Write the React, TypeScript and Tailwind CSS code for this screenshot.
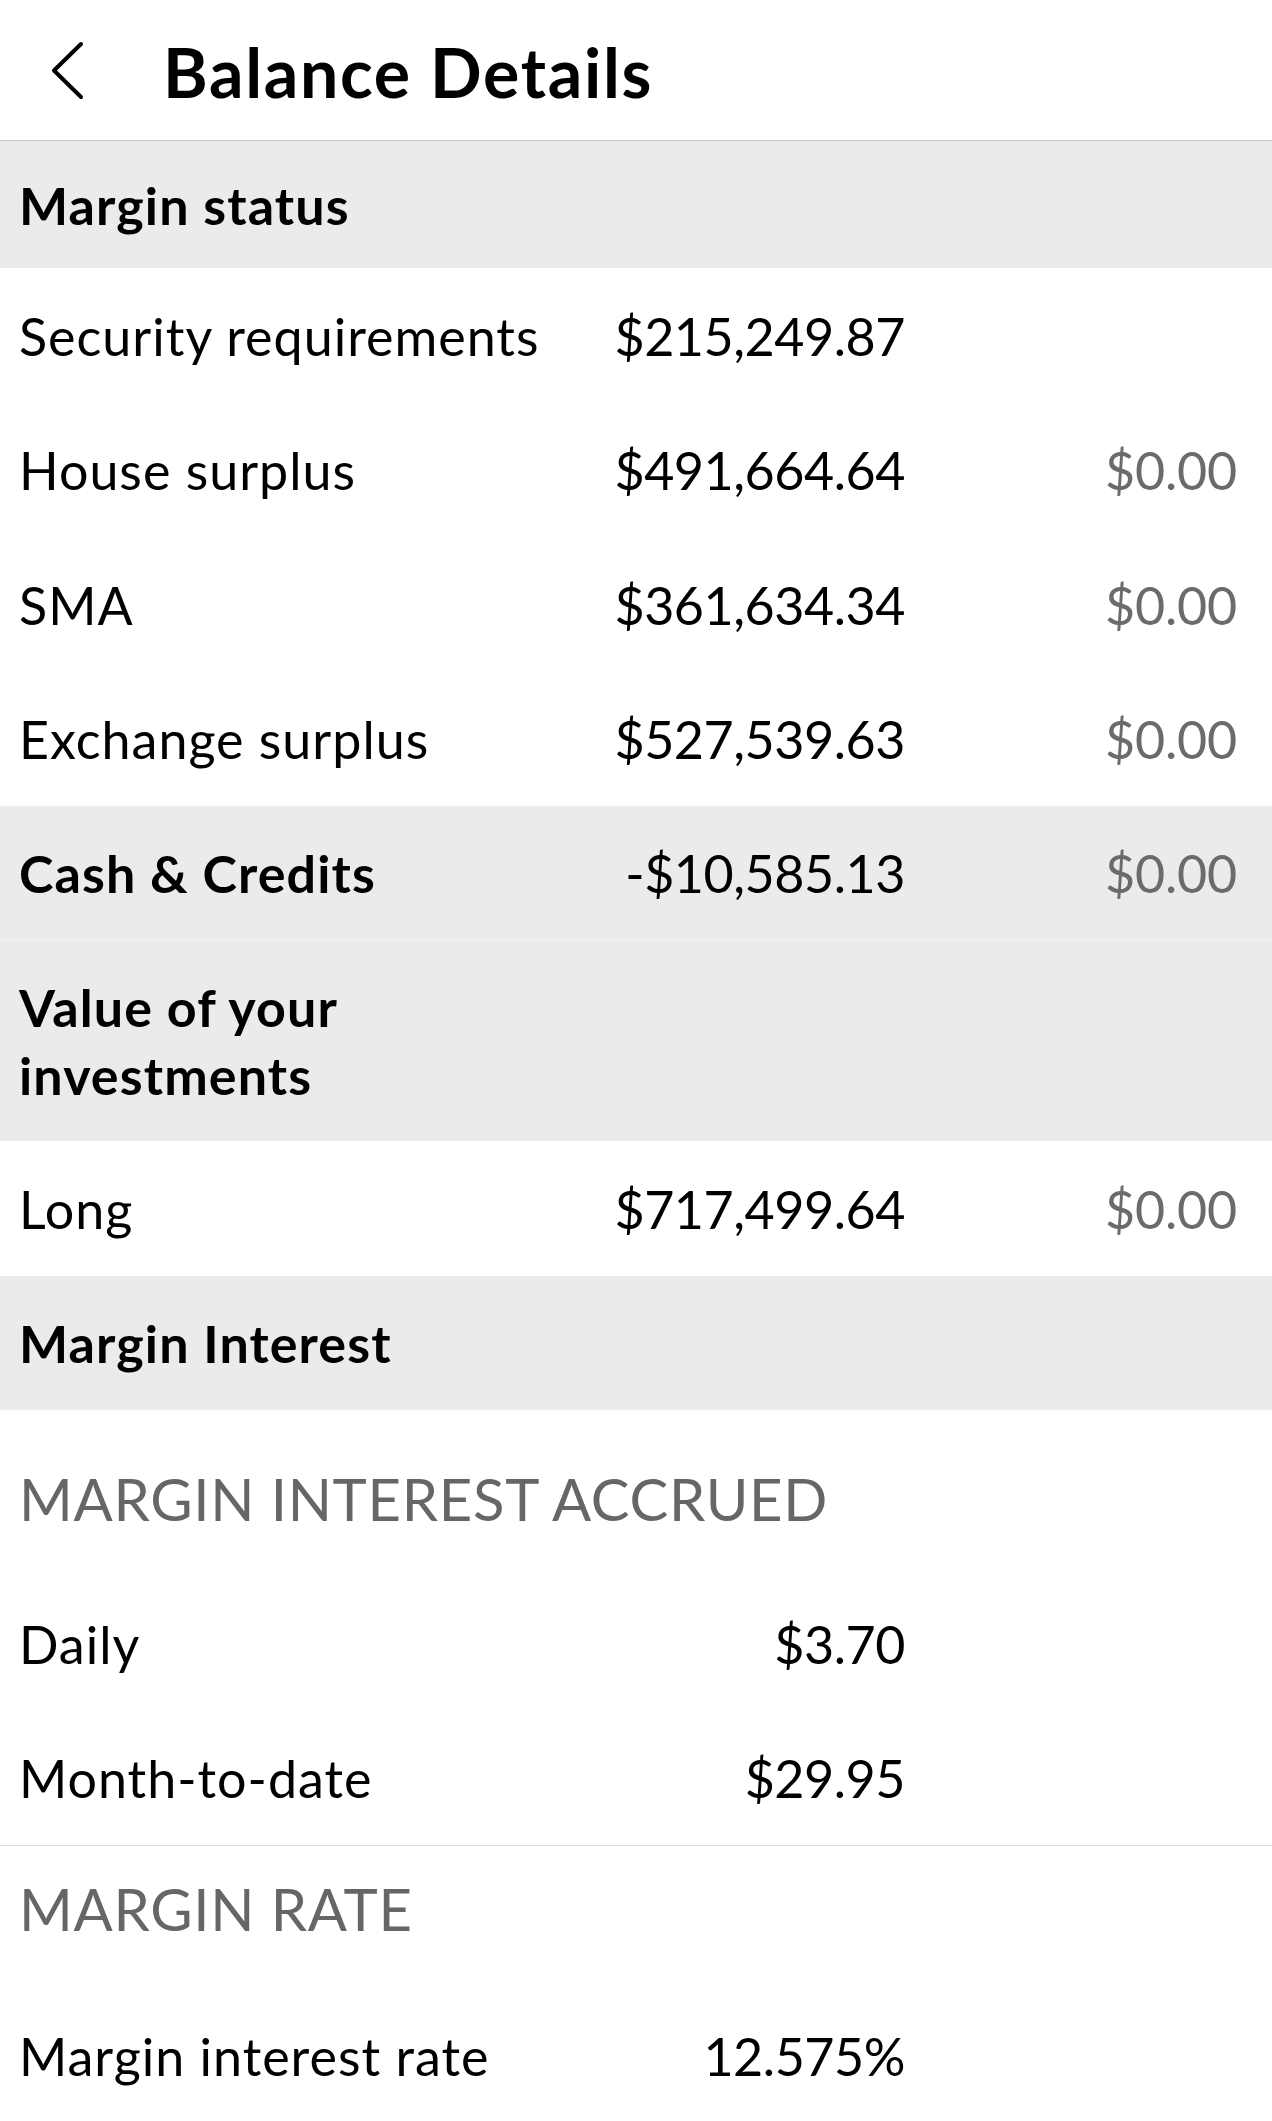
import React from "react";

type RowProps = {
  label: string;
  value?: string;
  extra?: string;
  bold?: boolean;
  shaded?: boolean;
  h?: string;
};

function Row({ label, value, extra, bold, shaded, h = "h-[135px]" }: RowProps) {
  return (
    <div
      className={`grid grid-cols-[586px_300px_332px] items-center pl-[19px] ${h} ${
        shaded ? "bg-[#ebebeb]" : "bg-white"
      }`}
    >
      <div className={bold ? "font-bold text-black tracking-[1.1px]" : "text-black tracking-[1px]"}>
        {label}
      </div>
      <div className="text-right text-black tracking-[-0.45px]">{value}</div>
      <div className="text-right text-[#6b6b6b] tracking-[-0.2px]">{extra}</div>
    </div>
  );
}

function BackIcon() {
  return (
    <svg width="40" height="64" viewBox="0 0 40 64" fill="none" className="ml-[47px]">
      <path
        d="M34 4 L7 30.5 L34 57"
        stroke="#000"
        strokeWidth="4"
        strokeLinecap="round"
        strokeLinejoin="round"
      />
    </svg>
  );
}

export default function App() {
  return (
    <div className="w-[1272px] min-h-[2121px] bg-white font-[Lato,'Liberation_Sans',sans-serif] text-[52px] leading-[68px] overflow-hidden">
      {/* top bar */}
      <div className="h-[141px] flex items-center border-b border-[#c8c8c8] pt-[4px]">
        <BackIcon />
        <h1 className="ml-[76px] text-[68px] leading-[80px] font-bold text-black tracking-[1.7px]">
          Balance Details
        </h1>
      </div>

      <div className="h-[127px] flex items-center pl-[19px] bg-[#ebebeb] font-bold tracking-[1.1px]">
        Margin status
      </div>

      <Row label="Security requirements" value="$215,249.87" h="h-[135px]" />
      <Row label="House surplus" value="$491,664.64" extra="$0.00" h="h-[134px]" />
      <Row label="SMA" value="$361,634.34" extra="$0.00" h="h-[135px]" />
      <Row label="Exchange surplus" value="$527,539.63" extra="$0.00" h="h-[134px]" />
      <Row
        label="Cash & Credits"
        value="-$10,585.13"
        extra="$0.00"
        bold
        shaded
        h="h-[135px] border-b border-[#f2f2f2]"
      />

      <div className="bg-[#ebebeb] pl-[19px] py-[32px] font-bold tracking-[1.1px] h-[200px]">
        <div className="max-w-[440px]">Value of your investments</div>
      </div>

      <Row label="Long" value="$717,499.64" extra="$0.00" h="h-[135px]" />

      <div className="h-[134px] flex items-center pl-[19px] bg-[#ebebeb] font-bold tracking-[1.1px]">
        Margin Interest
      </div>

      <div className="pl-[19px] pt-[62px] pb-[51px] text-[58px] leading-[54px] text-[#666666] tracking-[0.7px]">
        MARGIN INTEREST ACCRUED
      </div>
      <Row label="Daily" value="$3.70" h="h-[134px]" />
      <Row label="Month-to-date" value="$29.95" h="h-[134px]" />

      <div className="border-t border-[#dcdcdc] pl-[19px] pt-[36px] pb-[52px] text-[58px] leading-[54px] text-[#666666] tracking-[0.7px]">
        MARGIN RATE
      </div>
      <Row label="Margin interest rate" value="12.575%" h="h-[135px]" />
    </div>
  );
}
